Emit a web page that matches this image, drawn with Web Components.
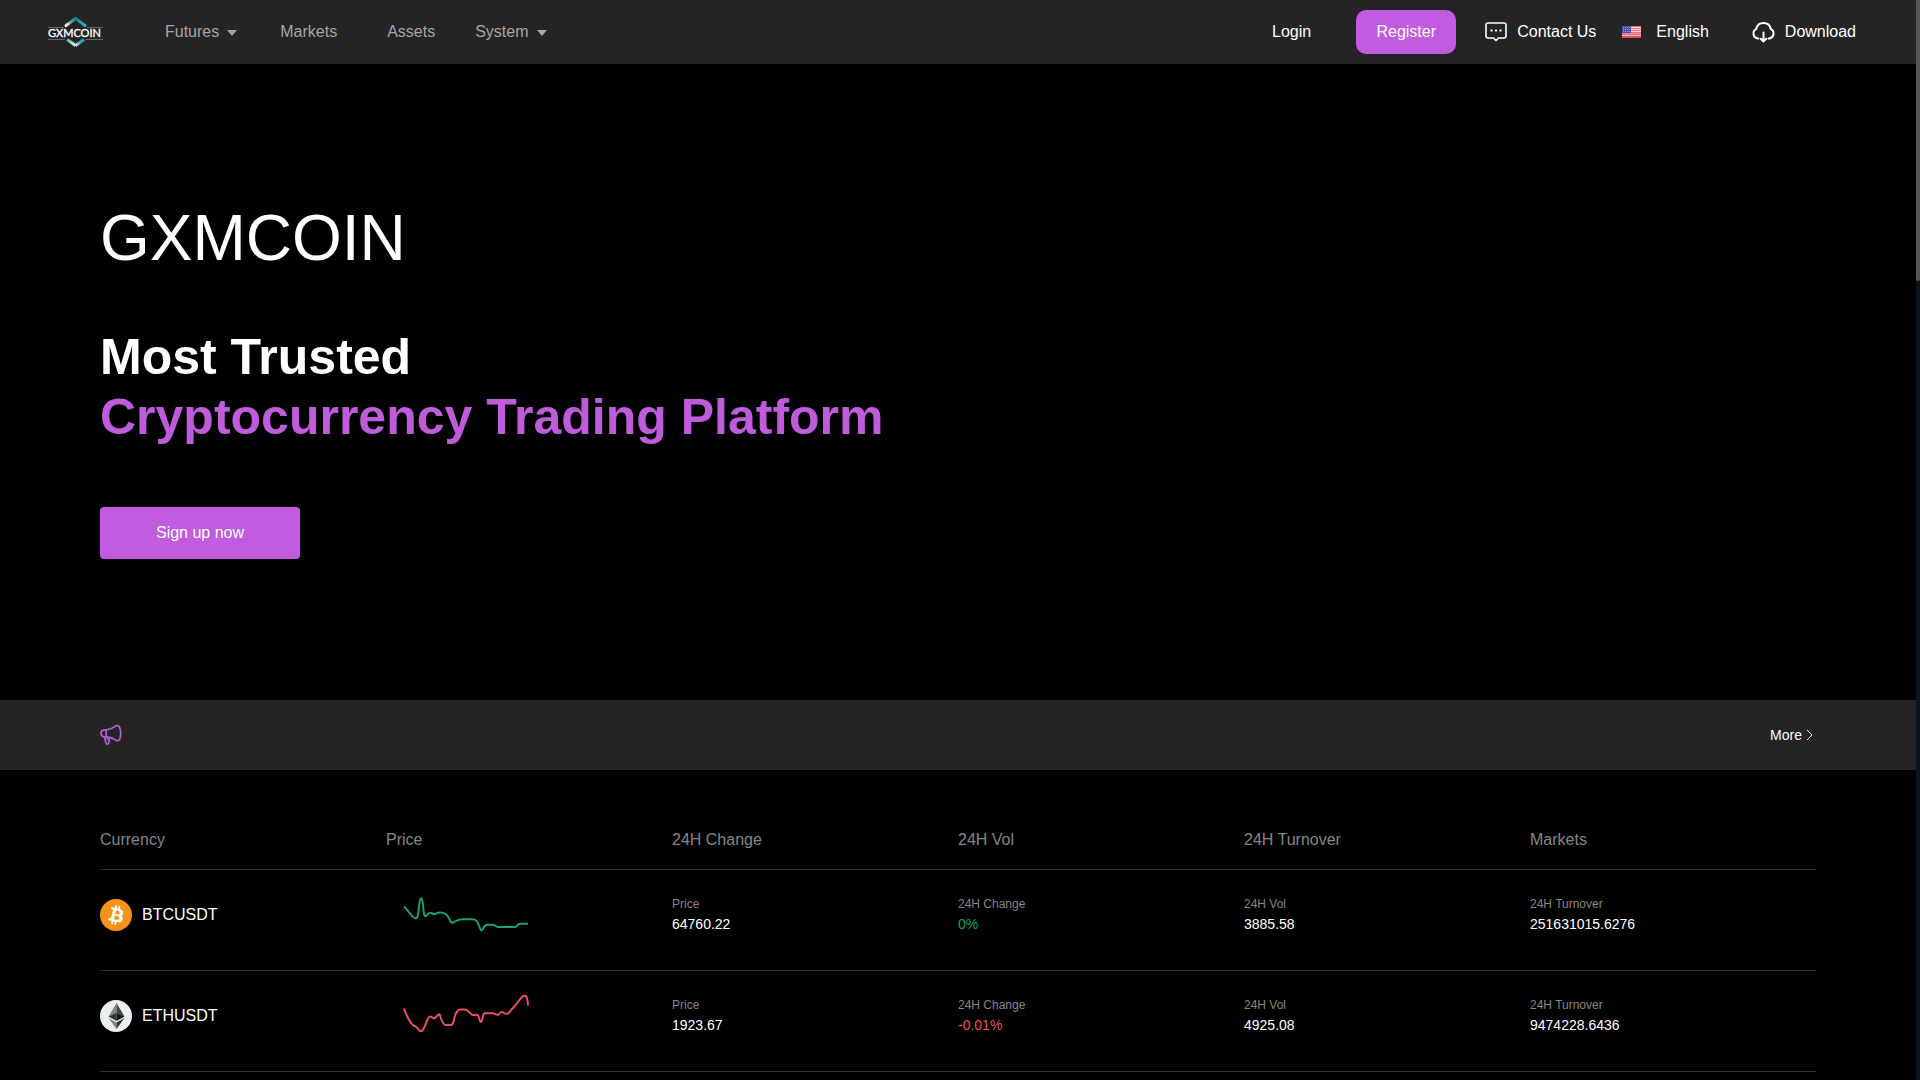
<!DOCTYPE html>
<html lang="en">
<head>
<meta charset="utf-8">
<title>GXMCOIN</title>
<style>
  html, body { margin: 0; height: 100%; }
  body {
    background: #000;
    color: #fff;
    font-family: "Liberation Sans", Arial, sans-serif;
    font-size: 16px;
    overflow: hidden;
  }
</style>
</head>
<body>
<exchange-app></exchange-app>

<script>
const define = (name, markup, Base = HTMLElement) => {
  const template = document.createElement('template');
  template.innerHTML = markup;
  customElements.define(name, class extends Base {
    constructor() {
      super();
      this.attachShadow({ mode: 'open' }).append(template.content.cloneNode(true));
    }
  });
};

define('brand-logo', `
  <style>
    :host { display: block; width: 56px; height: 32px; }
    svg { display: block; overflow: visible; }
    text { font: 11px Lato, "Liberation Sans", sans-serif; fill: #fff; stroke: #fff; stroke-width: .3; }
  </style>
  <svg width="56" height="32" viewBox="0 0 56 32" role="img" aria-label="GXMCOIN">
    <defs>
      <linearGradient id="a" x1="0" x2="1" y1="1" y2="0"><stop offset="0" stop-color="#fff"/><stop offset=".45" stop-color="#5fae94"/><stop offset="1" stop-color="#14808f"/></linearGradient>
      <linearGradient id="b" x1="0" x2="1"><stop offset="0" stop-color="#14808f"/><stop offset="1" stop-color="#25b5d2"/></linearGradient>
      <linearGradient id="c" x1="0" x2="1"><stop offset="0" stop-color="#4eb392"/><stop offset=".5" stop-color="#9ed6be"/><stop offset="1" stop-color="#fff"/></linearGradient>
      <linearGradient id="d" x1="0" x2="1" y1="1" y2="0"><stop offset="0" stop-color="#fff"/><stop offset=".5" stop-color="#2fa5b4"/><stop offset="1" stop-color="#22b0d4"/></linearGradient>
    </defs>
    <g fill="none" stroke-width="3">
      <path d="M18 9.500L27.500 2.500" stroke="url(#a)" stroke-linecap="round"/>
      <path d="M27.500 2.500L37 9.500" stroke="url(#b)" stroke-linecap="round"/>
      <path d="M19 23.500L27.500 29.500" stroke="url(#c)"/>
      <path d="M27.500 29.500L36 23.500" stroke="url(#d)"/>
      <path d="M0 11.500H16M39 11.500H55M0 23.500H17M38 23.500H55" stroke="#666" stroke-width="1"/>
    </g>
    <text x="0" y="21">GXMCOIN</text>
  </svg>`);

define('nav-link', `
  <style>
    :host { display: block; }
    a { color: inherit; text-decoration: none; display: flex; align-items: center; line-height: 24px; white-space: nowrap; }
  </style>
  <a href="#"><slot></slot></a>`);

define('nav-menu', `
  <style>
    :host { display: block; }
    button { all: unset; display: flex; align-items: center; gap: 8px; line-height: 24px; cursor: pointer; }
    i { border: 5px solid transparent; border-top: 6px solid #a6a6a6; border-bottom: 0; margin: 2px 3px 0 0; }
  </style>
  <button type="button" aria-haspopup="menu"><slot></slot><i></i></button>`);

define('action-button', `
  <style>
    :host { display: block; width: 100px; height: 44px; --radius: 10px; }
    button {
      width: 100%; height: 100%; border: 0; padding: 0; border-radius: var(--radius);
      background: #c15bdf; color: #fff; font: inherit; cursor: pointer;
    }
  </style>
  <button type="button"><slot></slot></button>`);

define('icon-chat', `
  <style>:host, svg { display: block; }</style>
  <svg width="22" height="22" viewBox="0 0 22 22" fill="none" stroke="#fff" stroke-width="1.600" stroke-linejoin="round">
    <path d="M3 2H19Q21 2 21 4V15Q21 17 19 17H13.500L11 19.500L8.500 17H3Q1 17 1 15V4Q1 2 3 2Z"/>
    <path d="M5.500 9.500h2M10 9.500h2M14.500 9.500h2" stroke-width="2"/>
  </svg>`);

define('icon-flag', `
  <style>:host, svg { display: block; }</style>
  <svg width="19" height="12" viewBox="0 0 19 12">
    <path fill="#f5d5d8" d="M0 0h19v12H0z"/>
    <path fill="#ef7379" d="M0 0h19v1H0zM0 2h19v1H0zM0 4h19v1H0zM0 6h19v1H0z"/>
    <path fill="#e04f58" d="M0 7.500h19v1.300H0zM0 9.800h19V12H0z"/>
    <path fill="#4d4ea8" d="M0 0h9v7H0z"/>
    <path stroke="#8f90cf" stroke-dasharray="1 1" d="M1 1.500h7M1 3.500h7M1 5.500h7"/>
  </svg>`);

define('icon-cloud', `
  <style>:host, svg { display: block; }</style>
  <svg width="25" height="22" viewBox="0 0 25 22" fill="none" stroke="#fff" stroke-width="2" stroke-linecap="round" stroke-linejoin="round">
    <path d="M7.500 17.500H6.500A5.200 5.200 0 0 1 5.300 7.800A7.400 7.400 0 0 1 19.700 7.800A5.200 5.200 0 0 1 18.500 17.500H17.500"/>
    <path d="M12.500 11.500V20M9.800 17.800L12.500 20.500L15.200 17.800"/>
  </svg>`);

/* icons are slotted into nav-link, so their spacing stays in site-header */
define('site-header', `
  <style>
    :host { display: block; background: #242424; }
    header { display: flex; align-items: center; justify-content: space-between; height: 64px; padding: 0 60px 0 48px; }
    nav { display: flex; align-items: center; color: #a6a6a6; gap: 40px; }
    brand-logo { margin-right: 21px; }
    .wide { margin-right: 10px; }
    .account { display: flex; align-items: center; }
    action-button { margin: 0 29px 0 45px; }
    icon-chat { margin-right: 10px; }
    icon-cloud { margin-right: 9px; }
    icon-flag { margin: 0 15px 0 26px; }
    .download { margin-left: 42px; }
  </style>
  <header>
    <nav>
      <brand-logo></brand-logo>
      <nav-menu>Futures</nav-menu>
      <nav-link class="wide">Markets</nav-link>
      <nav-link>Assets</nav-link>
      <nav-menu>System</nav-menu>
    </nav>
    <div class="account">
      <nav-link>Login</nav-link>
      <action-button>Register</action-button>
      <nav-link><icon-chat></icon-chat>Contact Us</nav-link>
      <nav-link><icon-flag></icon-flag>English</nav-link>
      <nav-link class="download"><icon-cloud></icon-cloud>Download</nav-link>
    </div>
  </header>`);

define('hero-banner', `
  <style>
    :host { display: block; background: #000; }
    section { padding: 137px 100px 141px; }
    h1 { font-size: 64px; line-height: 74px; font-weight: 400; margin: 0 0 52px; }
    h2 { font-size: 50px; line-height: 60px; font-weight: 700; margin: 0 0 60px; }
    h2 span { display: block; color: #bf5cdc; }
    action-button { width: 200px; height: 52px; --radius: 4px; }
  </style>
  <section>
    <h1>GXMCOIN</h1>
    <h2>Most Trusted <span>Cryptocurrency Trading Platform</span></h2>
    <action-button>Sign up now</action-button>
  </section>`);

define('notice-bar', `
  <style>
    :host { display: block; background: #242424; }
    div { display: flex; align-items: center; justify-content: space-between; height: 70px; padding: 0 100px; }
    a { display: flex; align-items: center; gap: 4px; color: #fff; text-decoration: none; font-size: 14px; margin-right: 3px; }
    svg { display: block; }
  </style>
  <div>
    <svg width="22" height="22" viewBox="0 0 22 22" fill="none" stroke="#b65cd6" stroke-width="1.700" stroke-linejoin="round" stroke-linecap="round" aria-hidden="true">
      <path d="M6.200 5.800H4.500Q1 6.200 1 9.200Q1 12.400 4.500 12.900H6.200ZM6.200 5.800Q11.500 5.300 15.800 1.800Q18.200 .8 19.600 3.200Q21.800 8.800 19.800 15Q18.800 17.400 16.200 16.400Q11.800 13.300 6.200 12.900"/>
      <path d="M4.600 13L6 19Q7 21.200 8.600 19.500L9.600 13.500M7.400 13.200V15"/>
    </svg>
    <a href="#">More
      <svg width="7" height="12" viewBox="0 0 7 12" fill="none" stroke="#eee" aria-hidden="true"><path d="M1 1L6 6L1 11"/></svg>
    </a>
  </div>`);

define('coin-btc', `
  <style>:host, svg { display: block; }</style>
  <svg width="32" height="32" viewBox="0 0 32 32" aria-hidden="true">
    <circle cx="16" cy="16" r="16" fill="#f7931a"/>
    <path fill="#fff" d="M23.189 14.020c.314-2.096-1.283-3.223-3.465-3.975l.708-2.840-1.728-.430-.690 2.765c-.454-.114-.920-.220-1.385-.326l.695-2.783L15.596 6l-.708 2.839c-.376-.086-.746-.170-1.104-.260l.002-.009-2.384-.595-.460 1.846s1.283.294 1.256.312c.700.175.826.638.805 1.006l-.806 3.235c.048.012.110.030.180.057l-.183-.045-1.130 4.532c-.086.212-.303.531-.793.410.018.025-1.256-.313-1.256-.313l-.858 1.978 2.250.561c.418.105.828.215 1.231.318l-.715 2.872 1.727.430.708-2.840c.472.127.930.245 1.378.357l-.706 2.828 1.728.430.715-2.866c2.948.558 5.164.333 6.097-2.333.752-2.146-.037-3.385-1.588-4.192 1.130-.260 1.980-1.003 2.207-2.538zm-3.950 5.538c-.533 2.147-4.148.986-5.320.695l.950-3.805c1.172.293 4.929.872 4.370 3.110zm.535-5.569c-.487 1.953-3.495.960-4.470.717l.860-3.450c.975.243 4.118.696 3.610 2.733z"/>
  </svg>`);

define('coin-eth', `
  <style>:host, svg { display: block; }</style>
  <svg width="32" height="32" viewBox="0 0 32 32" aria-hidden="true">
    <circle cx="16" cy="16" r="16" fill="#ecf0f1"/>
    <path fill="#828384" d="M16.500 3L8.500 16.500L16.500 12.800Z"/>
    <path fill="#444546" d="M16.500 3L24.500 16.500L16.500 12.800Z"/>
    <path fill="#343535" d="M16.500 12.800L8.500 16.500L16.500 21Z"/>
    <path fill="#151616" d="M16.500 12.800L24.500 16.500L16.500 21Z"/>
    <path fill="#828384" d="M8.500 18L16.500 29V22.600Z"/>
    <path fill="#343535" d="M24.500 18L16.500 29V22.600Z"/>
  </svg>`);

define('coin-name', `
  <style>:host { display: flex; align-items: center; gap: 10px; height: 50px; }</style>
  <slot name="icon"></slot><slot></slot>`);

define('market-stat', `
  <style>
    :host { display: flex; flex-direction: column; justify-content: center; height: 48px; font-size: 14px; line-height: 20px; color: #fff; }
    :host([trend="up"]) { color: #0da071; }
    :host([trend="down"]) { color: #e9535f; }
    span { font-size: 12px; color: #868686; }
  </style>
  <span><slot name="label"></slot></span><div><slot></slot></div>`);

customElements.define('spark-line', class extends HTMLElement {
  constructor() {
    super();
    this.attachShadow({ mode: 'open' }).innerHTML = `
      <style>:host, svg { display: block; } path { fill: none; stroke-width: 2; stroke-linejoin: round; }</style>
      <svg width="160" height="60" viewBox="0 0 160 60" aria-hidden="true"><path/></svg>`;
  }
  connectedCallback() {
    const path = this.shadowRoot.querySelector('path');
    path.setAttribute('d', this.getAttribute('line'));
    path.setAttribute('stroke', this.getAttribute('color'));
  }
});

define('market-table', `
  <style>
    :host { display: block; padding: 50px 100px 0; }
    table { width: 100%; table-layout: fixed; border-collapse: separate; border-spacing: 0; text-align: left; }
    th { height: 50px; padding: 0 0 10px; box-sizing: border-box; font-weight: 400; color: #868686; vertical-align: middle; }
    th, td { border-bottom: 1px solid #333; }
    td { padding: 20px 0; height: 60px; vertical-align: top; }
  </style>
  <table>
    <thead>
      <tr><th>Currency</th><th>Price</th><th>24H Change</th><th>24H Vol</th><th>24H Turnover</th><th>Markets</th></tr>
    </thead>
    <tbody>
      <tr>
        <td><coin-name><coin-btc slot="icon"></coin-btc>BTCUSDT</coin-name></td>
        <td><spark-line color="#14a374" line="M18 16.500C21 18.500 24 25 28 27.500C32 30 32 26 33 16C34 6 36 6 37 15C38 26 38.500 27.500 40.500 25.500C44 21.500 45 22.500 47 23.800C49 25 50 22.500 54 22.500C59 22.500 61 24.500 63.500 29C65 34 67 33.500 70 31Q73 29.200 76 29.200H86C91 29.200 91.500 32 93.500 37C95 41.500 95.500 41.500 98 37C99 35 100 34.700 102 34.700H107C109 34.700 109.500 37 112 37H129C131 37 131.500 33.700 134 33.700H142"/></td>
        <td><market-stat><span slot="label">Price</span>64760.22</market-stat></td>
        <td><market-stat trend="up"><span slot="label">24H Change</span>0%</market-stat></td>
        <td><market-stat><span slot="label">24H Vol</span>3885.58</market-stat></td>
        <td><market-stat><span slot="label">24H Turnover</span>251631015.6276</market-stat></td>
      </tr>
      <tr>
        <td><coin-name><coin-eth slot="icon"></coin-eth>ETHUSDT</coin-name></td>
        <td><spark-line color="#ea5063" line="M18 17.500C20 23 24 32 27.500 34.500C31 35.500 31 37 33 39C35 41 36 41 38.500 36C41 30 42 25.500 44 25.500C46 25.500 47 28.500 49 27C51.500 25 52 22.500 53.500 23.500C55 26 56 34 60 34H65C68 34 67 30 69 25C70.500 20 72 18.500 74.500 18.500H79C82 18.500 83.500 23 86.500 24C90 24.200 91.500 22.500 92.500 25C94 30.500 94.500 32.500 96 29.500C97 26 97 22.300 99 22.300H107C109 22.300 110.500 24.500 112.500 23.500C115 21 115.500 20.300 118 21.800C121 23.500 121.500 23.300 124 20.500C128 15.500 130 14 133 9.500C136 5.500 139 3 140.500 6Q142 9 142 14.500"/></td>
        <td><market-stat><span slot="label">Price</span>1923.67</market-stat></td>
        <td><market-stat trend="down"><span slot="label">24H Change</span>-0.01%</market-stat></td>
        <td><market-stat><span slot="label">24H Vol</span>4925.08</market-stat></td>
        <td><market-stat><span slot="label">24H Turnover</span>9474228.6436</market-stat></td>
      </tr>
    </tbody>
  </table>`);

define('scroll-rail', `
  <style>
    :host { display: block; flex: 0 0 4px; background: #0e151d; }
    div { height: 26%; background: #555; border-radius: 0 0 2px 2px; }
  </style>
  <div></div>`);

define('exchange-app', `
  <style>
    :host { display: flex; height: 100vh; overflow: hidden; }
    main { flex: 1; min-width: 0; overflow: hidden; }
  </style>
  <main>
    <site-header></site-header>
    <hero-banner></hero-banner>
    <notice-bar></notice-bar>
    <market-table></market-table>
  </main>
  <scroll-rail></scroll-rail>`);
</script>
</body>
</html>
